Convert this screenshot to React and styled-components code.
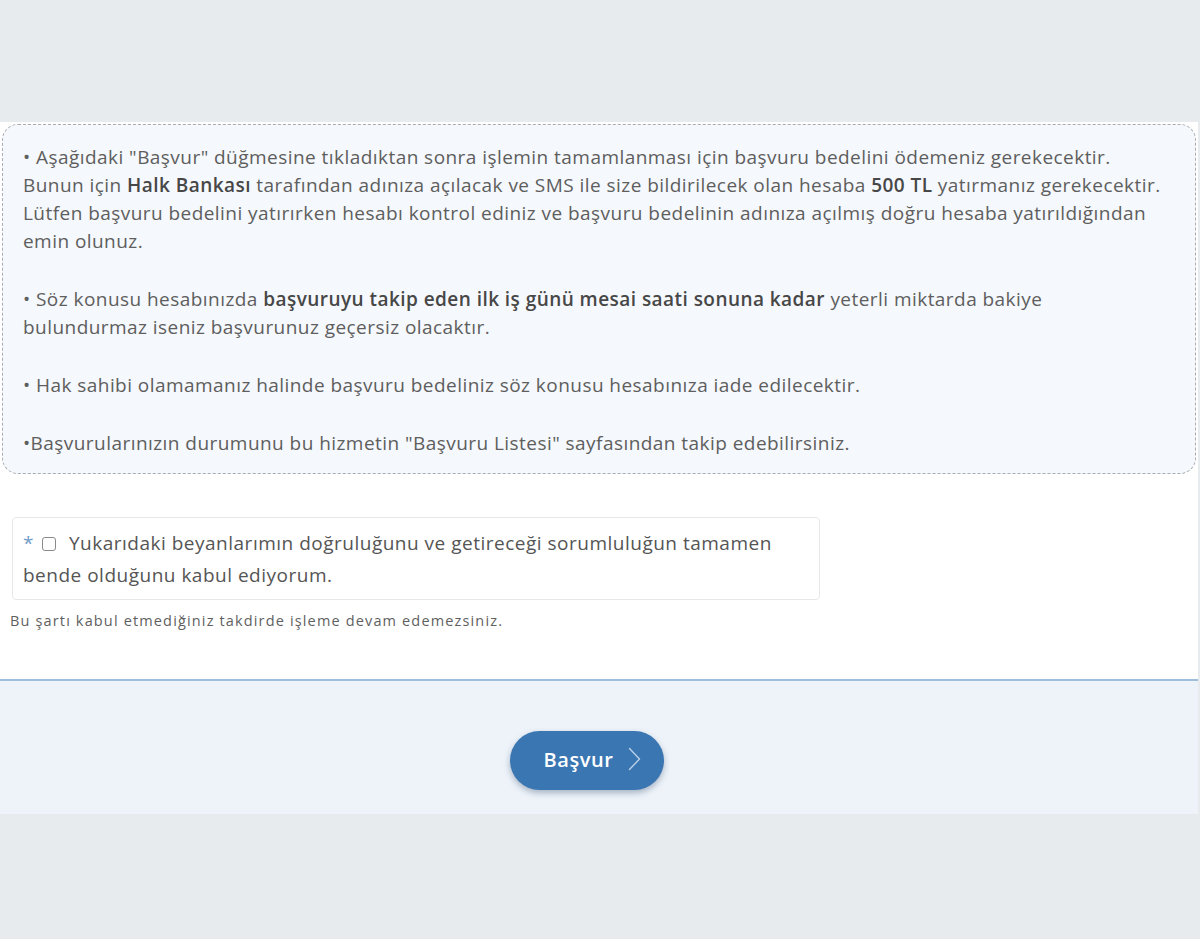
import React from "react";
import styled, { createGlobalStyle } from "styled-components";

const Global = createGlobalStyle`
  html, body { margin: 0; padding: 0; background: #e8ebee; }
  body { font-family: "Open Sans", "Noto Sans", sans-serif; color: #5a5a5a; }
`;

const Page = styled.div`
  width: 1200px;
  min-height: 939px;
  display: flex;
  flex-direction: column;
`;

const TopSpace = styled.div`
  height: 122px;
`;

const Main = styled.main`
  width: 1198px;
  background: #ffffff;
  padding: 2px 0 0;
  display: flex;
  flex-direction: column;
`;

const InfoBox = styled.section`
  margin: 0 2px;
  border: 1px dashed #a9acb0;
  border-radius: 16px;
  background: #f5f8fc;
  padding: 18px 20px 16px;
  display: flex;
  flex-direction: column;
  gap: 30px;
`;

const Para = styled.p`
  margin: 0;
  font-size: 19px;
  letter-spacing: 0.45px;
  line-height: 28px;
  color: #5e5e5e;
  white-space: nowrap;
  b { font-weight: 600; color: #474747; }
`;

const ConsentBox = styled.label`
  margin: 43px 0 0 12px;
  width: 786px;
  border: 1px solid #e6e7e9;
  border-radius: 4px;
  padding: 9px 10px 8px;
  font-size: 19px;
  letter-spacing: 0.5px;
  line-height: 32px;
  color: #555;
  white-space: nowrap;
`;

const Star = styled.span`
  color: #6f9cc8;
  margin-right: 8px;
`;

const Box = styled.span`
  display: inline-block;
  width: 12px;
  height: 12px;
  border: 1.5px solid #8a8a8a;
  border-radius: 3px;
  margin-right: 13px;
  vertical-align: -1px;
`;

const Helper = styled.p`
  margin: 12px 0 0 10px;
  font-size: 14.5px;
  letter-spacing: 1.15px;
  line-height: 18px;
  color: #5f5f5f;
  padding-bottom: 49px;
`;

const Footer = styled.footer`
  width: 1198px;
  border-top: 2px solid #9dbfdc;
  background: #eef3f9;
  display: flex;
  align-items: center;
  justify-content: center;
  padding-top: 25px;
  box-sizing: border-box;
  height: 135px;
`;

const Button = styled.button`
  width: 154px;
  height: 59px;
  margin-right: 24px;
  border: none;
  border-radius: 30px;
  background: #3a76b2;
  color: #ffffff;
  font-family: "Open Sans", sans-serif;
  font-size: 20px;
  letter-spacing: 0.6px;
  font-weight: 600;
  display: flex;
  align-items: center;
  justify-content: center;
  gap: 14px;
  box-shadow: 0 3px 6px rgba(30, 60, 100, 0.35);
  padding: 0 0 2px 10px;
  cursor: pointer;
`;

export default function App() {
  return (
    <Page>
      <Global />
      <TopSpace />
      <Main>
        <InfoBox>
          <Para>
            • Aşağıdaki "Başvur" düğmesine tıkladıktan sonra işlemin tamamlanması için başvuru bedelini ödemeniz gerekecektir.
            <br />
            Bunun için <b>Halk Bankası</b> tarafından adınıza açılacak ve SMS ile size bildirilecek olan hesaba <b>500 TL</b> yatırmanız gerekecektir.
            <br />
            Lütfen başvuru bedelini yatırırken hesabı kontrol ediniz ve başvuru bedelinin adınıza açılmış doğru hesaba yatırıldığından
            <br />
            emin olunuz.
          </Para>
          <Para>
            • Söz konusu hesabınızda <b>başvuruyu takip eden ilk iş günü mesai saati sonuna kadar</b> yeterli miktarda bakiye
            <br />
            bulundurmaz iseniz başvurunuz geçersiz olacaktır.
          </Para>
          <Para>• Hak sahibi olamamanız halinde başvuru bedeliniz söz konusu hesabınıza iade edilecektir.</Para>
          <Para>•Başvurularınızın durumunu bu hizmetin "Başvuru Listesi" sayfasından takip edebilirsiniz.</Para>
        </InfoBox>
        <ConsentBox>
          <Star>*</Star>
          <Box />
          Yukarıdaki beyanlarımın doğruluğunu ve getireceği sorumluluğun tamamen
          <br />
          bende olduğunu kabul ediyorum.
        </ConsentBox>
        <Helper>Bu şartı kabul etmediğiniz takdirde işleme devam edemezsiniz.</Helper>
      </Main>
      <Footer>
        <Button>
          Başvur
          <svg width="13" height="24" viewBox="0 0 13 24" fill="none">
            <path d="M1.5 1.5 L11.5 12 L1.5 22.5" stroke="#b9d0e8" strokeWidth="1.4" strokeLinecap="round" strokeLinejoin="round" />
          </svg>
        </Button>
      </Footer>
    </Page>
  );
}
